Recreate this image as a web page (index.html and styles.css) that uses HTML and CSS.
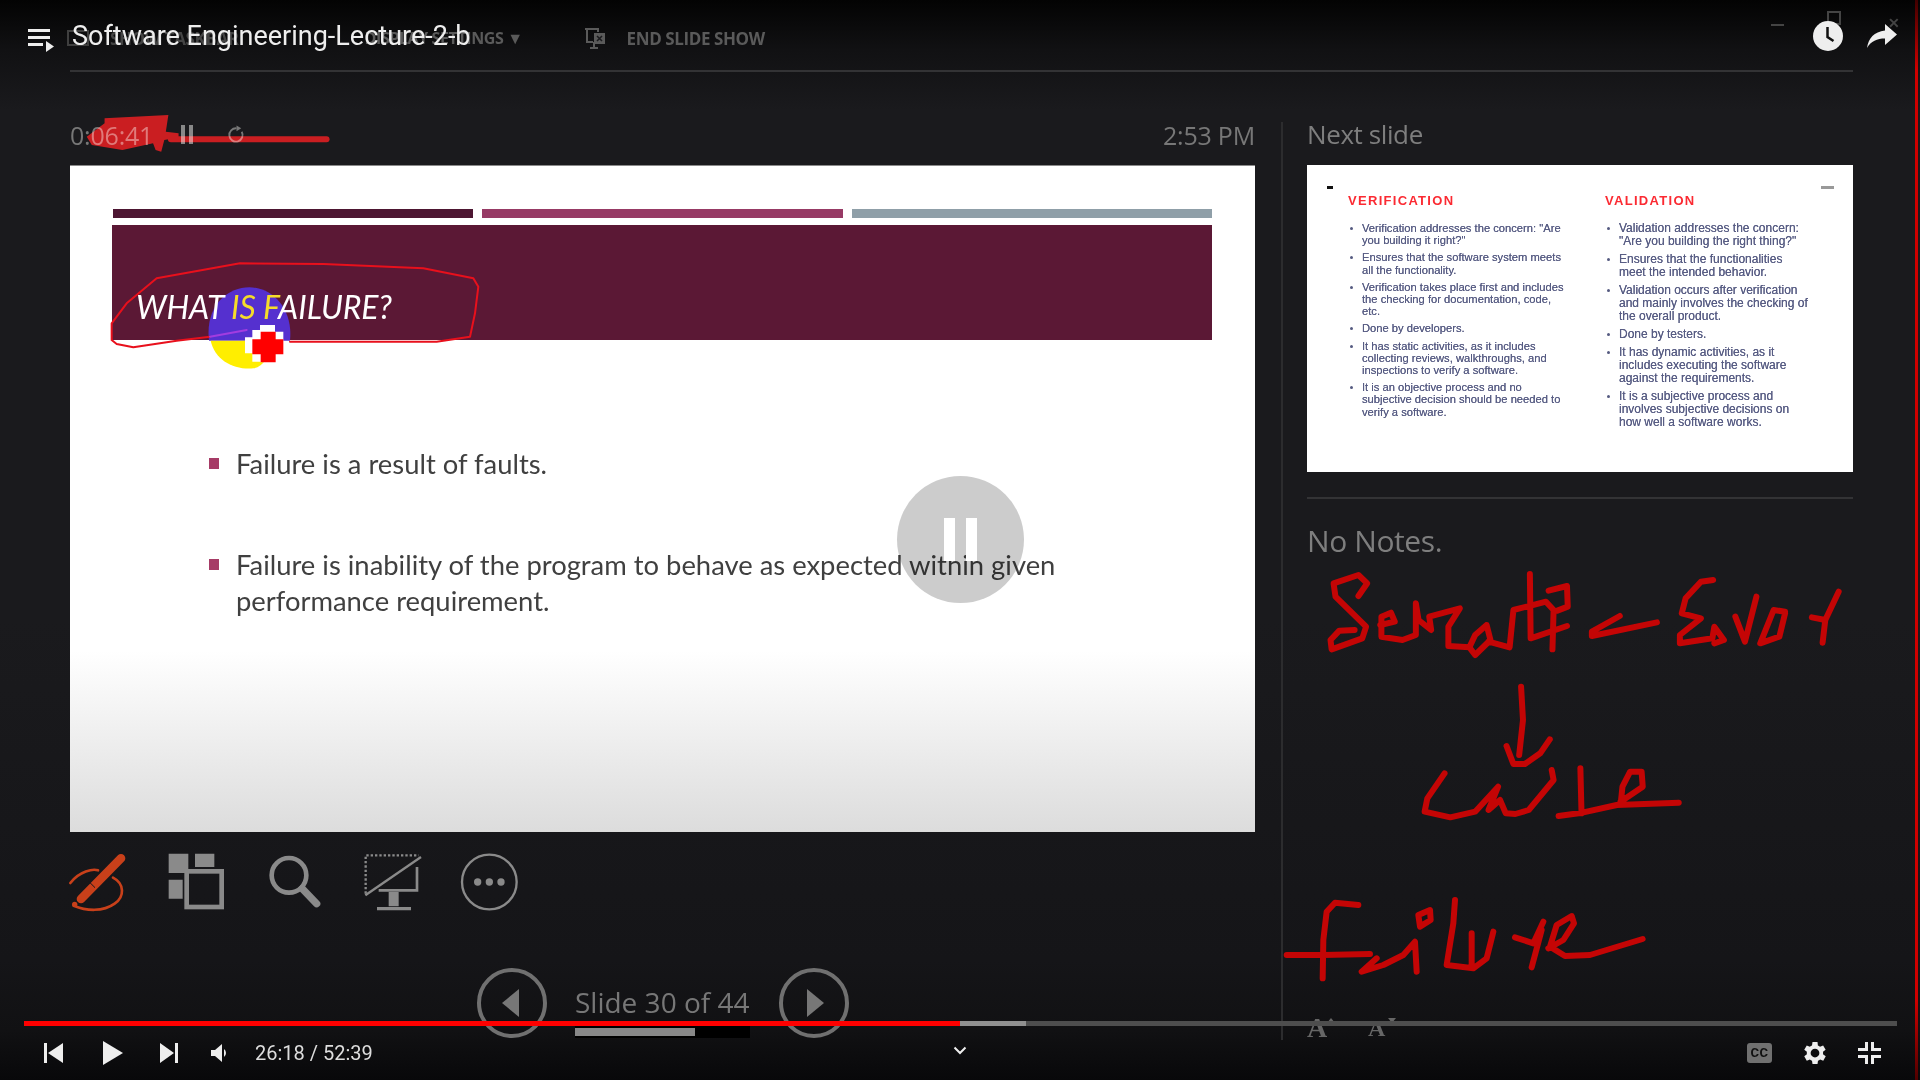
FILE: index.html
```html
<!DOCTYPE html>
<html lang="en">
<head>
  <meta charset="UTF-8" />
  <title>Software Engineering-Lecture-2-b</title>
  <link rel="stylesheet" href="styles.css">
</head>
<body>
  <div class="deck">
    <div class="toolbar">
      <svg class="tb-icon" viewBox="0 0 24 24"><rect x="2" y="5" width="20" height="14" fill="none" stroke="#3f3f3f" stroke-width="2"/></svg>
      <span class="tb-item tb-taskbar">SHOW TASKBAR</span>
      <span class="tb-item tb-display">DISPLAY SETTINGS &#9660;</span>
      <svg class="tb-icon tb-end" viewBox="0 0 24 24"><path d="M2 3h13v3M4 3v13h6M7 22h8M11 16v6" fill="none" stroke="#5a5a5a" stroke-width="2"/><rect x="11" y="7" width="11" height="11" fill="#5a5a5a"/><path d="M14 10l5 5M19 10l-5 5" stroke="#1a1a1d" stroke-width="1.5"/></svg>
      <span class="tb-item">END SLIDE SHOW</span>
      <div class="win-btns">
        <span class="win-min"></span>
        <span class="win-max"></span>
        <span class="win-close">&#10005;</span>
      </div>
    </div>
    <div class="rule"></div>

    <div class="columns">
      <div class="main-col">
        <div class="timer-row">
          <div class="timer">
            <span>0:06:41</span>
            <span class="timer-pause"></span>
            <svg class="timer-replay" viewBox="0 0 20 20"><path d="M15.5 6.5A7 7 0 1 1 10 3" fill="none" stroke="#777" stroke-width="2"/><path d="M10 0l5 3-5 3z" fill="#777"/></svg>
          </div>
          <span>2:53 PM</span>
        </div>

        <div class="slide">
          <div class="slide-bars">
            <span class="bar-dark"></span>
            <span class="bar-mid"></span>
            <span class="bar-grey"></span>
          </div>
          <div class="slide-title">
            <h1>WHAT <em>IS F</em>AILURE?</h1>
          </div>
          <ul class="slide-list">
            <li>Failure is a result of faults.</li>
            <li>Failure is inability of the program to behave as expected within given performance requirement.</li>
          </ul>
        </div>

        <div class="tools">
          <svg viewBox="55 35 180 180"><path d="M62 128C90 92 130 85 145 90M190 112C225 130 225 170 195 190C160 215 110 212 72 196" fill="none" stroke="#c8401a" stroke-width="8" stroke-linecap="round"/><path d="M214 54L94 176" stroke="#c8401a" stroke-width="26" stroke-linecap="round"/><path d="M116 122l20 20" stroke="#15151a" stroke-width="3"/><circle cx="75" cy="192" r="8" fill="#c8401a"/></svg>
          <svg viewBox="345 35 180 180"><path d="M353 40h59v58h-59zM432 40h58v40h-58v-40zM353 118h42v57h-42z" fill="#8a8a8a"/><rect x="407" y="93" width="105" height="107" fill="none" stroke="#8a8a8a" stroke-width="14"/></svg>
          <svg viewBox="640 35 180 180"><circle cx="715" cy="105" r="52" fill="none" stroke="#8a8a8a" stroke-width="14"/><path d="M755 145L798 190" stroke="#8a8a8a" stroke-width="22" stroke-linecap="round"/></svg>
          <svg viewBox="935 35 180 180"><path d="M946 160V45H1105" fill="none" stroke="#8a8a8a" stroke-width="7" stroke-dasharray="7 6"/><path d="M945 165L1112 50" stroke="#8a8a8a" stroke-width="7"/><path d="M1100 80V150H985" fill="none" stroke="#8a8a8a" stroke-width="8"/><path d="M1015 155h30v43h-30zM980 200h102v10h-102z" fill="#8a8a8a"/></svg>
          <svg viewBox="1235 35 180 180"><circle cx="1323" cy="125" r="82" fill="none" stroke="#8a8a8a" stroke-width="7"/><circle cx="1288" cy="125" r="11" fill="#8a8a8a"/><circle cx="1323" cy="125" r="11" fill="#8a8a8a"/><circle cx="1358" cy="125" r="11" fill="#8a8a8a"/></svg>
        </div>

        <div class="slide-nav">
          <span class="nav-btn"><i class="tri tri-left"></i></span>
          <div class="nav-mid">
            <span class="nav-label">Slide 30 of 44</span>
            <div class="nav-track"><div class="nav-fill"></div></div>
          </div>
          <span class="nav-btn"><i class="tri tri-right"></i></span>
        </div>
      </div>

      <div class="side-col">
        <div class="next-label">Next slide</div>
        <div class="thumb">
          <span class="mark mark-left"></span>
          <span class="mark mark-right"></span>
          <div class="thumb-col thumb-verify">
            <h3>VERIFICATION</h3>
            <ul>
              <li>Verification addresses the concern: "Are<br>you building it right?"</li>
              <li>Ensures that the software system meets<br>all the functionality.</li>
              <li>Verification takes place first and includes<br>the checking for documentation, code,<br>etc.</li>
              <li>Done by developers.</li>
              <li>It has static activities, as it includes<br>collecting reviews, walkthroughs, and<br>inspections to verify a software.</li>
              <li>It is an objective process and no<br>subjective decision should be needed to<br>verify a software.</li>
            </ul>
          </div>
          <div class="thumb-col thumb-valid">
            <h3>VALIDATION</h3>
            <ul>
              <li>Validation addresses the concern:<br>"Are you building the right thing?"</li>
              <li>Ensures that the functionalities<br>meet the intended behavior.</li>
              <li>Validation occurs after verification<br>and mainly involves the checking of<br>the overall product.</li>
              <li>Done by testers.</li>
              <li>It has dynamic activities, as it<br>includes executing the software<br>against the requirements.</li>
              <li>It is a subjective process and<br>involves subjective decisions on<br>how well a software works.</li>
            </ul>
          </div>
        </div>
        <div class="side-rule"></div>
        <div class="notes">No Notes.</div>
        <div class="font-btns">
          <span class="font-a font-a-up">A</span>
          <span class="font-a font-a-down">A</span>
        </div>
      </div>
    </div>
  </div>

  <!-- pen drawn over the recording -->
  <svg class="ink ink-timer" viewBox="0 0 1568 510" preserveAspectRatio="none">
    <path class="ink-fill" d="M205 355L330 345L325 395L350 400L350 412L322 420L316 455L305 450L300 430L240 450L180 435L170 410L205 370Z"/>
    <path class="ink-line" d="M335 418H640"/>
  </svg>
  <svg class="ink ink-loop" viewBox="0 0 1320 570" preserveAspectRatio="none">
    <path class="pointer-blue" d="M357 452C345 350 410 292 478 292C550 292 610 360 600 452Z"/>
    <path class="pointer-yellow" d="M362 452C375 510 430 540 490 535C520 530 540 500 540 452Z"/>
    <path class="ink-thin" d="M65 450L65 400L110 340L200 265L350 238L450 220L700 222L1000 235L1150 265L1165 290L1155 370L1140 440L1040 455L600 455M360 440L260 452L130 472L80 462L65 450"/>
    <path class="ink-violet" d="M360 440L470 420"/>
    <path class="cursor-white" d="M510 405h45v20h25v92h-68v-2h-25v-25h-22v-48h22v-22h23z"/>
    <path class="cursor-red" d="M512 425h45v23h23v45h-23v24h-45v-24h-25v-45h25z"/>
  </svg>
  <svg class="ink ink-semantic" viewBox="0 0 1568 900" preserveAspectRatio="none">
    <path class="ink-line" d="M205 108L228 70L205 45L140 70L145 110L225 200L215 235L135 268L132 240L155 212L195 210"/>
    <path class="ink-line" d="M262 195L300 185L290 158L265 170L265 230L320 240L355 225L355 130L362 180L395 210L390 170L470 145L440 200L440 258L495 262L510 285L550 240L540 195L510 225L495 262M545 245L600 262L610 150L695 125L715 150L712 268M653 42L655 235L750 198M702 92L750 78L752 140L725 152"/>
    <path class="ink-line" d="M888 168L815 215L815 228L985 187"/>
    <path class="ink-line" d="M1132 60L1100 65L1060 115L1050 160L1100 175L1045 225L1045 250L1130 235L1135 200L1160 240L1135 250M1190 170L1215 245L1245 110M1320 155L1290 150L1255 250L1305 230L1320 160M1390 172L1425 180L1460 95M1425 180L1418 248"/>
    <path class="ink-line" d="M630 380L635 480L625 585M592 558L610 612L640 612L680 580L705 538"/>
    <path class="ink-line" d="M430 640L385 715L378 755L445 772L510 755L570 680L545 750L575 720L590 760L615 762L650 750L715 660L710 630M785 625L788 760M728 768L790 758L880 735L1042 728M890 735L895 680L915 635L945 635L948 680L890 725"/>
  </svg>
  <svg class="ink ink-failure" viewBox="0 0 1200 330" preserveAspectRatio="none">
    <path class="ink-line" d="M265 75L195 68L170 95L160 180L158 295M50 225H160L300 222M320 235L275 275L340 255L400 225L435 185L440 275M445 105L480 90L482 120L450 140ZM555 60L550 130L530 255L610 265L650 235L670 155M605 160V260M735 172L790 190L820 125M815 150L785 262M835 205L880 180L912 130L905 108L860 135L840 200L885 228L960 225L1118 177"/>
  </svg>

  <div class="pause-flash"><span></span><span></span></div>
  <div class="edge-red"></div>

  <div class="yt-top">
    <svg class="yt-list" viewBox="0 0 26 24"><path d="M0 1h22v3H0zM0 8h22v3H0zM0 15h15v3H0z" fill="#eee"/><path d="M18 13l8 5.500-8 5.500z" fill="#eee"/></svg>
    <span class="yt-title">Software Engineering-Lecture-2-b</span>
    <svg class="yt-clock" viewBox="0 0 30 30"><circle cx="15" cy="15" r="15" fill="#eee"/><path d="M14.500 6v10l6 4" fill="none" stroke="#111" stroke-width="2.500"/></svg>
    <svg class="yt-share" viewBox="0 0 30 24"><path d="M18 0l12 10.500L18 21v-6.500C10 14.500 4 17 0 24 1.500 14 7 8 18 6.500z" fill="#eee"/></svg>
  </div>

  <div class="yt-bottom">
    <div class="yt-progress">
      <div class="yt-played"></div>
      <div class="yt-buffer"></div>
    </div>
    <div class="yt-controls">
      <span class="yt-btn"><svg width="19" height="20" viewBox="0 0 19 20"><path d="M0 0h3v20H0zM19 0v20L4 10z" fill="#eee"/></svg></span>
      <span class="yt-btn yt-play"><svg width="20" height="24" viewBox="0 0 20 24"><path d="M0 0l20 12L0 24z" fill="#eee"/></svg></span>
      <span class="yt-btn"><svg width="18" height="20" viewBox="0 0 18 20"><path d="M15 0h3v20h-3zM0 0v20l14-10z" fill="#eee"/></svg></span>
      <span class="yt-btn yt-vol"><svg width="17" height="18" viewBox="0 0 17 18"><path d="M0 6h4l7-6v18l-7-6H0z" fill="#eee"/><path d="M13 5a5 5 0 0 1 0 8z" fill="#eee"/></svg></span>
      <span class="yt-time">26:18 / 52:39</span>
      <span class="yt-spacer"></span>
      <span class="yt-btn yt-right"><span class="yt-cc">CC</span></span>
      <span class="yt-btn yt-right"><svg width="30" height="30" viewBox="0 0 24 24"><path fill="#eee" d="M19.400 13a7.500 7.500 0 0 0 0-2l2.100-1.600-2-3.500-2.500 1a7.500 7.500 0 0 0-1.700-1L15 3.200h-4l-.4 2.700a7.500 7.500 0 0 0-1.700 1l-2.500-1-2 3.500L6.500 11a7.500 7.500 0 0 0 0 2l-2.100 1.600 2 3.500 2.500-1a7.500 7.500 0 0 0 1.700 1l.4 2.700h4l.4-2.700a7.500 7.500 0 0 0 1.700-1l2.500 1 2-3.500zM13 15.500a3.500 3.500 0 1 1 0-7 3.500 3.500 0 0 1 0 7z" transform="translate(-1)"/></svg></span>
      <span class="yt-btn yt-right"><svg width="23" height="22" viewBox="0 0 23 22"><path d="M7 0h3v9H0V6h7zM13 0h3v6h7v3H13zM0 13h10v9H7v-6H0zM13 13h10v3h-7v6h-3z" fill="#eee"/></svg></span>
    </div>
    <svg class="yt-chevron" width="14" height="9" viewBox="0 0 14 9"><path d="M1.500 1.500L7 7l5.500-5.500" fill="none" stroke="#eee" stroke-width="2"/></svg>
  </div>
</body>
</html>
```

FILE: styles.css
```css
/* Global Styles */
html, body {
  margin: 0;
  padding: 0;
  height: 100%;
}

body {
  width: 1920px;
  height: 1080px;
  overflow: hidden;
  position: relative;
  font-family: 'Open Sans', sans-serif;
  color: #777777;
  background: linear-gradient(to bottom, #030303 0, #111113 50px, #1a1a1d 110px, #1a1a1d 620px, #151518 960px, #111113 1030px, #08080a 1080px);
}

/* PowerPoint presenter view, under the player */
.toolbar {
  height: 70px;
  display: flex;
  align-items: center;
  padding: 6px 20px 0 66px;
  box-sizing: border-box;
  font-weight: 700;
  font-size: 17px;
  color: #5a5a5a;
}

.tb-icon {
  width: 24px;
  height: 24px;
  flex: none;
}

.tb-item {
  white-space: nowrap;
  letter-spacing: -0.4px;
  margin-left: 20px;
}

.tb-taskbar {
  color: #444444;
  margin-left: 20px;
}

.tb-display {
  margin-left: 126px;
  font-size: 16px;
}

.tb-end {
  margin-left: 60px;
}

.win-btns {
  margin-left: auto;
  display: flex;
  align-items: center;
  height: 40px;
  margin-top: -26px;
  color: #444444;
}

.win-min {
  width: 13px;
  height: 2px;
  background: #444444;
}

.win-max {
  width: 10px;
  height: 10px;
  border: 2px solid #444444;
  margin-left: 43px;
  margin-top: -14px;
}

.win-close {
  font-size: 14px;
  font-weight: 700;
  margin-left: 47px;
  margin-top: -6px;
}

.rule {
  height: 2px;
  margin: 0 67px 0 70px;
  background: #333335;
}

.columns {
  display: flex;
  padding-left: 70px;
}

.main-col {
  width: 1185px;
  flex: none;
}

.timer-row {
  height: 93px;
  display: flex;
  justify-content: space-between;
  align-items: center;
  box-sizing: border-box;
  padding-top: 32px;
  font-size: 25px;
  letter-spacing: -0.2px;
}

.timer {
  display: flex;
  align-items: center;
}

.timer-pause {
  width: 4px;
  height: 19px;
  margin-left: 28px;
  border-left: 4px solid #888888;
  border-right: 4px solid #888888;
}

.timer-replay {
  width: 19px;
  height: 20px;
  margin-left: 34px;
}

/* Current slide */
.slide {
  height: 667px;
  box-sizing: border-box;
  padding: 43px 43px 0 42px;
  background: linear-gradient(to bottom, #ffffff 0, #ffffff 485px, #dcdcdc 667px);
  border-top: 1px solid #8a8a8a;
}

.slide-bars {
  display: flex;
  gap: 9px;
  padding-left: 1px;
}

.slide-bars span {
  flex: 1;
  height: 9px;
}

.bar-dark { background: #4d1632; }
.bar-mid { background: #973a65; }
.bar-grey { background: #8f9fa8; }

.slide-title {
  margin-top: 7px;
  height: 115px;
  background: #5b1835;
  box-sizing: border-box;
  padding: 64px 0 0 24px;
}

.slide-title h1 {
  position: relative;
  z-index: 2;
  margin: 0;
  font-family: 'Lato', sans-serif;
  font-size: 32px;
  line-height: 36px;
  font-weight: 400;
  font-style: italic;
  letter-spacing: -0.1px;
  color: #ffffff;
}

.slide-title em {
  color: #f5dc2a;
}

.slide-list {
  list-style: none;
  margin: 106px 0 0;
  padding: 0 120px 0 124px;
  font-family: 'Lato', sans-serif;
  font-size: 27.4px;
  line-height: 35.5px;
  color: #404040;
}

.slide-list li {
  position: relative;
  margin-bottom: 65.5px;
}

.slide-list li::before {
  content: "";
  position: absolute;
  left: -27px;
  top: 12px;
  width: 10px;
  height: 11px;
  background: #a63b66;
}

.tools {
  display: flex;
  gap: 38px;
  margin: 20px 0 0 -2px;
}

.tools svg {
  width: 60px;
  height: 60px;
}

.slide-nav {
  display: flex;
  align-items: center;
  margin-top: 55px;
  padding-left: 407px;
}

.nav-btn {
  width: 70px;
  height: 70px;
  flex: none;
  box-sizing: border-box;
  border: 4px solid #707070;
  border-radius: 50%;
  display: flex;
  align-items: center;
  justify-content: center;
}

.tri {
  width: 0;
  height: 0;
  border-top: 14px solid transparent;
  border-bottom: 14px solid transparent;
}

.tri-left {
  border-right: 17px solid #777777;
  margin-left: -3px;
}

.tri-right {
  border-left: 17px solid #777777;
  margin-left: 3px;
}

.nav-mid {
  width: 175px;
  height: 71px;
  margin: 0 29px 0 28px;
}

.nav-label {
  display: block;
  padding-top: 16px;
  font-size: 28px;
  line-height: 38px;
  white-space: nowrap;
  color: #777777;
}

.nav-track {
  height: 12px;
  margin-top: 5px;
  background: #000000;
  padding: 2px 0;
  box-sizing: border-box;
}

.nav-fill {
  width: 120px;
  height: 8px;
  background: #888888;
}

/* Right column */
.side-col {
  position: relative;
  margin-left: 26px;
  width: 572px;
  height: 918px;
  box-sizing: border-box;
  padding-left: 24px;
  border-left: 2px solid #2c2c2e;
  margin-top: 50px;
}

.next-label {
  height: 43px;
  font-size: 26px;
  line-height: 24px;
  letter-spacing: -0.4px;
  color: #7e7e7e;
}

.thumb {
  position: relative;
  width: 546px;
  height: 307px;
  background: #ffffff;
  display: flex;
  font-family: 'Liberation Sans', sans-serif;
  box-sizing: border-box;
  filter: blur(0.5px);
}

.mark {
  position: absolute;
  top: 21px;
  height: 3px;
}

.mark-left {
  left: 20px;
  width: 6px;
  background: #111111;
}

.mark-right {
  left: 514px;
  width: 13px;
  background: #999999;
}

.thumb-col h3 {
  margin: 0;
  font-size: 13px;
  line-height: 16px;
  letter-spacing: 1.3px;
  color: #fb2a32;
}

.thumb-col ul {
  list-style: none;
  margin: 13px 0 0;
  padding: 0 0 0 14px;
  color: #585d84;
  text-shadow: 0 0 0.6px #585d84;
}

.thumb-col li {
  position: relative;
  white-space: nowrap;
}

.thumb-col li::before {
  content: "";
  position: absolute;
  left: -12px;
  top: 5px;
  width: 3px;
  height: 3px;
  border-radius: 50%;
  background: #555a80;
}

.thumb-verify {
  width: 298px;
  padding: 28px 0 0 41px;
  flex: none;
  box-sizing: border-box;
}

.thumb-verify ul {
  font-size: 11.2px;
  line-height: 12.2px;
}

.thumb-verify li {
  margin-bottom: 5px;
}

.thumb-valid {
  padding: 28px 0 0 0;
}

.thumb-valid ul {
  font-size: 12px;
  line-height: 13px;
}

.thumb-valid li {
  margin-bottom: 5px;
}

.side-rule {
  height: 2px;
  width: 546px;
  margin-top: 25px;
  background: #333335;
}

.notes {
  margin-top: 23px;
  font-size: 30px;
  line-height: 38px;
  letter-spacing: -0.4px;
  color: #7e7e7e;
}

.font-btns {
  position: absolute;
  left: 24px;
  top: 892px;
  display: flex;
  gap: 36px;
  font-family: 'Liberation Serif', serif;
  font-weight: 700;
  color: #666666;
}

.font-a {
  position: relative;
  width: 25px;
  line-height: 28px;
}

.font-a-up { font-size: 28px; }
.font-a-down { font-size: 24px; }

.font-a::after {
  content: "";
  position: absolute;
  left: 20px;
  top: 4px;
  border-left: 4px solid transparent;
  border-right: 4px solid transparent;
}

.font-a-up::after { border-bottom: 5px solid #666666; }
.font-a-down::after { border-top: 5px solid #666666; }

/* Pen marks */
.ink {
  position: absolute;
  overflow: visible;
}

.ink path {
  fill: none;
  stroke-linecap: round;
  stroke-linejoin: round;
  vector-effect: non-scaling-stroke;
}

.ink-line.ink-line {
  stroke: #c40505;
  stroke-width: 6px;
}

.ink-timer {
  left: 0;
  top: 0;
  width: 800px;
  height: 170px;
  mix-blend-mode: screen;
}

.ink .ink-fill {
  fill: #c40505;
}

.ink-loop {
  left: 90px;
  top: 190px;
  width: 440px;
  height: 190px;
  z-index: 1;
}

.ink .ink-thin {
  stroke: #e8101c;
  stroke-width: 2px;
}

.ink .ink-violet {
  stroke: #a23ce0;
  stroke-width: 2px;
}

.ink .pointer-blue {
  fill: #5530cf;
}

.ink .pointer-yellow { fill: #ffee00; }
.ink .cursor-white { fill: #ffffff; }
.ink .cursor-red { fill: #ff0000; }

.ink-semantic {
  left: 1280px;
  top: 560px;
  width: 600px;
  height: 300px;
}

.ink-failure {
  left: 1270px;
  top: 880px;
  width: 400px;
  height: 110px;
}

/* Player overlays */
.pause-flash {
  position: absolute;
  left: 897px;
  top: 476px;
  width: 127px;
  height: 127px;
  border-radius: 50%;
  background: rgba(0, 0, 0, 0.2);
  display: flex;
  justify-content: center;
  align-items: center;
  gap: 11px;
}

.pause-flash span {
  width: 11px;
  height: 43px;
  background: #ffffff;
}

.edge-red {
  position: absolute;
  right: 2px;
  top: 0;
  bottom: 0;
  width: 3px;
  background: linear-gradient(to bottom, #400000 0, #d00000 70px, #d00000 1000px, #500000 1080px);
}

.yt-top {
  position: absolute;
  left: 28px;
  right: 23px;
  top: 21px;
  display: flex;
  align-items: flex-start;
}

.yt-list {
  width: 26px;
  height: 24px;
  margin-top: 7px;
}

.yt-title {
  margin-left: 18px;
  font-family: 'Roboto', sans-serif;
  font-size: 27px;
  line-height: 30px;
  color: #eeeeee;
  white-space: nowrap;
  flex: 1;
}

.yt-clock {
  width: 30px;
  height: 30px;
}

.yt-share {
  width: 30px;
  height: 24px;
  margin: 3px 0 0 24px;
}

.yt-bottom {
  position: absolute;
  left: 24px;
  right: 23px;
  top: 1021px;
}

.yt-progress {
  position: relative;
  height: 5px;
  background: #4e4e4e;
}

.yt-played {
  position: absolute;
  left: 0;
  top: 0;
  bottom: 0;
  width: 936px;
  background: #ff0000;
  z-index: 1;
}

.yt-buffer {
  position: absolute;
  left: 0;
  top: 0;
  bottom: 0;
  width: 1002px;
  background: #909090;
}

.yt-controls {
  display: flex;
  align-items: center;
  height: 54px;
}

.yt-btn {
  width: 58px;
  flex: none;
  display: flex;
  justify-content: center;
  align-items: center;
}

.yt-play svg {
  margin-left: 3px;
}

.yt-vol {
  width: 42px;
}

.yt-right {
  width: 55px;
}

.yt-time {
  margin-left: 15px;
  font-family: 'Roboto', sans-serif;
  font-size: 20px;
  color: #dddddd;
  white-space: nowrap;
}

.yt-spacer {
  flex: 1;
}

.yt-cc {
  width: 25px;
  height: 20px;
  border-radius: 3px;
  background: #707070;
  color: #111111;
  font-family: 'Roboto', sans-serif;
  font-size: 13px;
  font-weight: 700;
  line-height: 20px;
  text-align: center;
  letter-spacing: 0.5px;
}

.yt-chevron {
  position: absolute;
  left: 929px;
  top: 25px;
}
```
